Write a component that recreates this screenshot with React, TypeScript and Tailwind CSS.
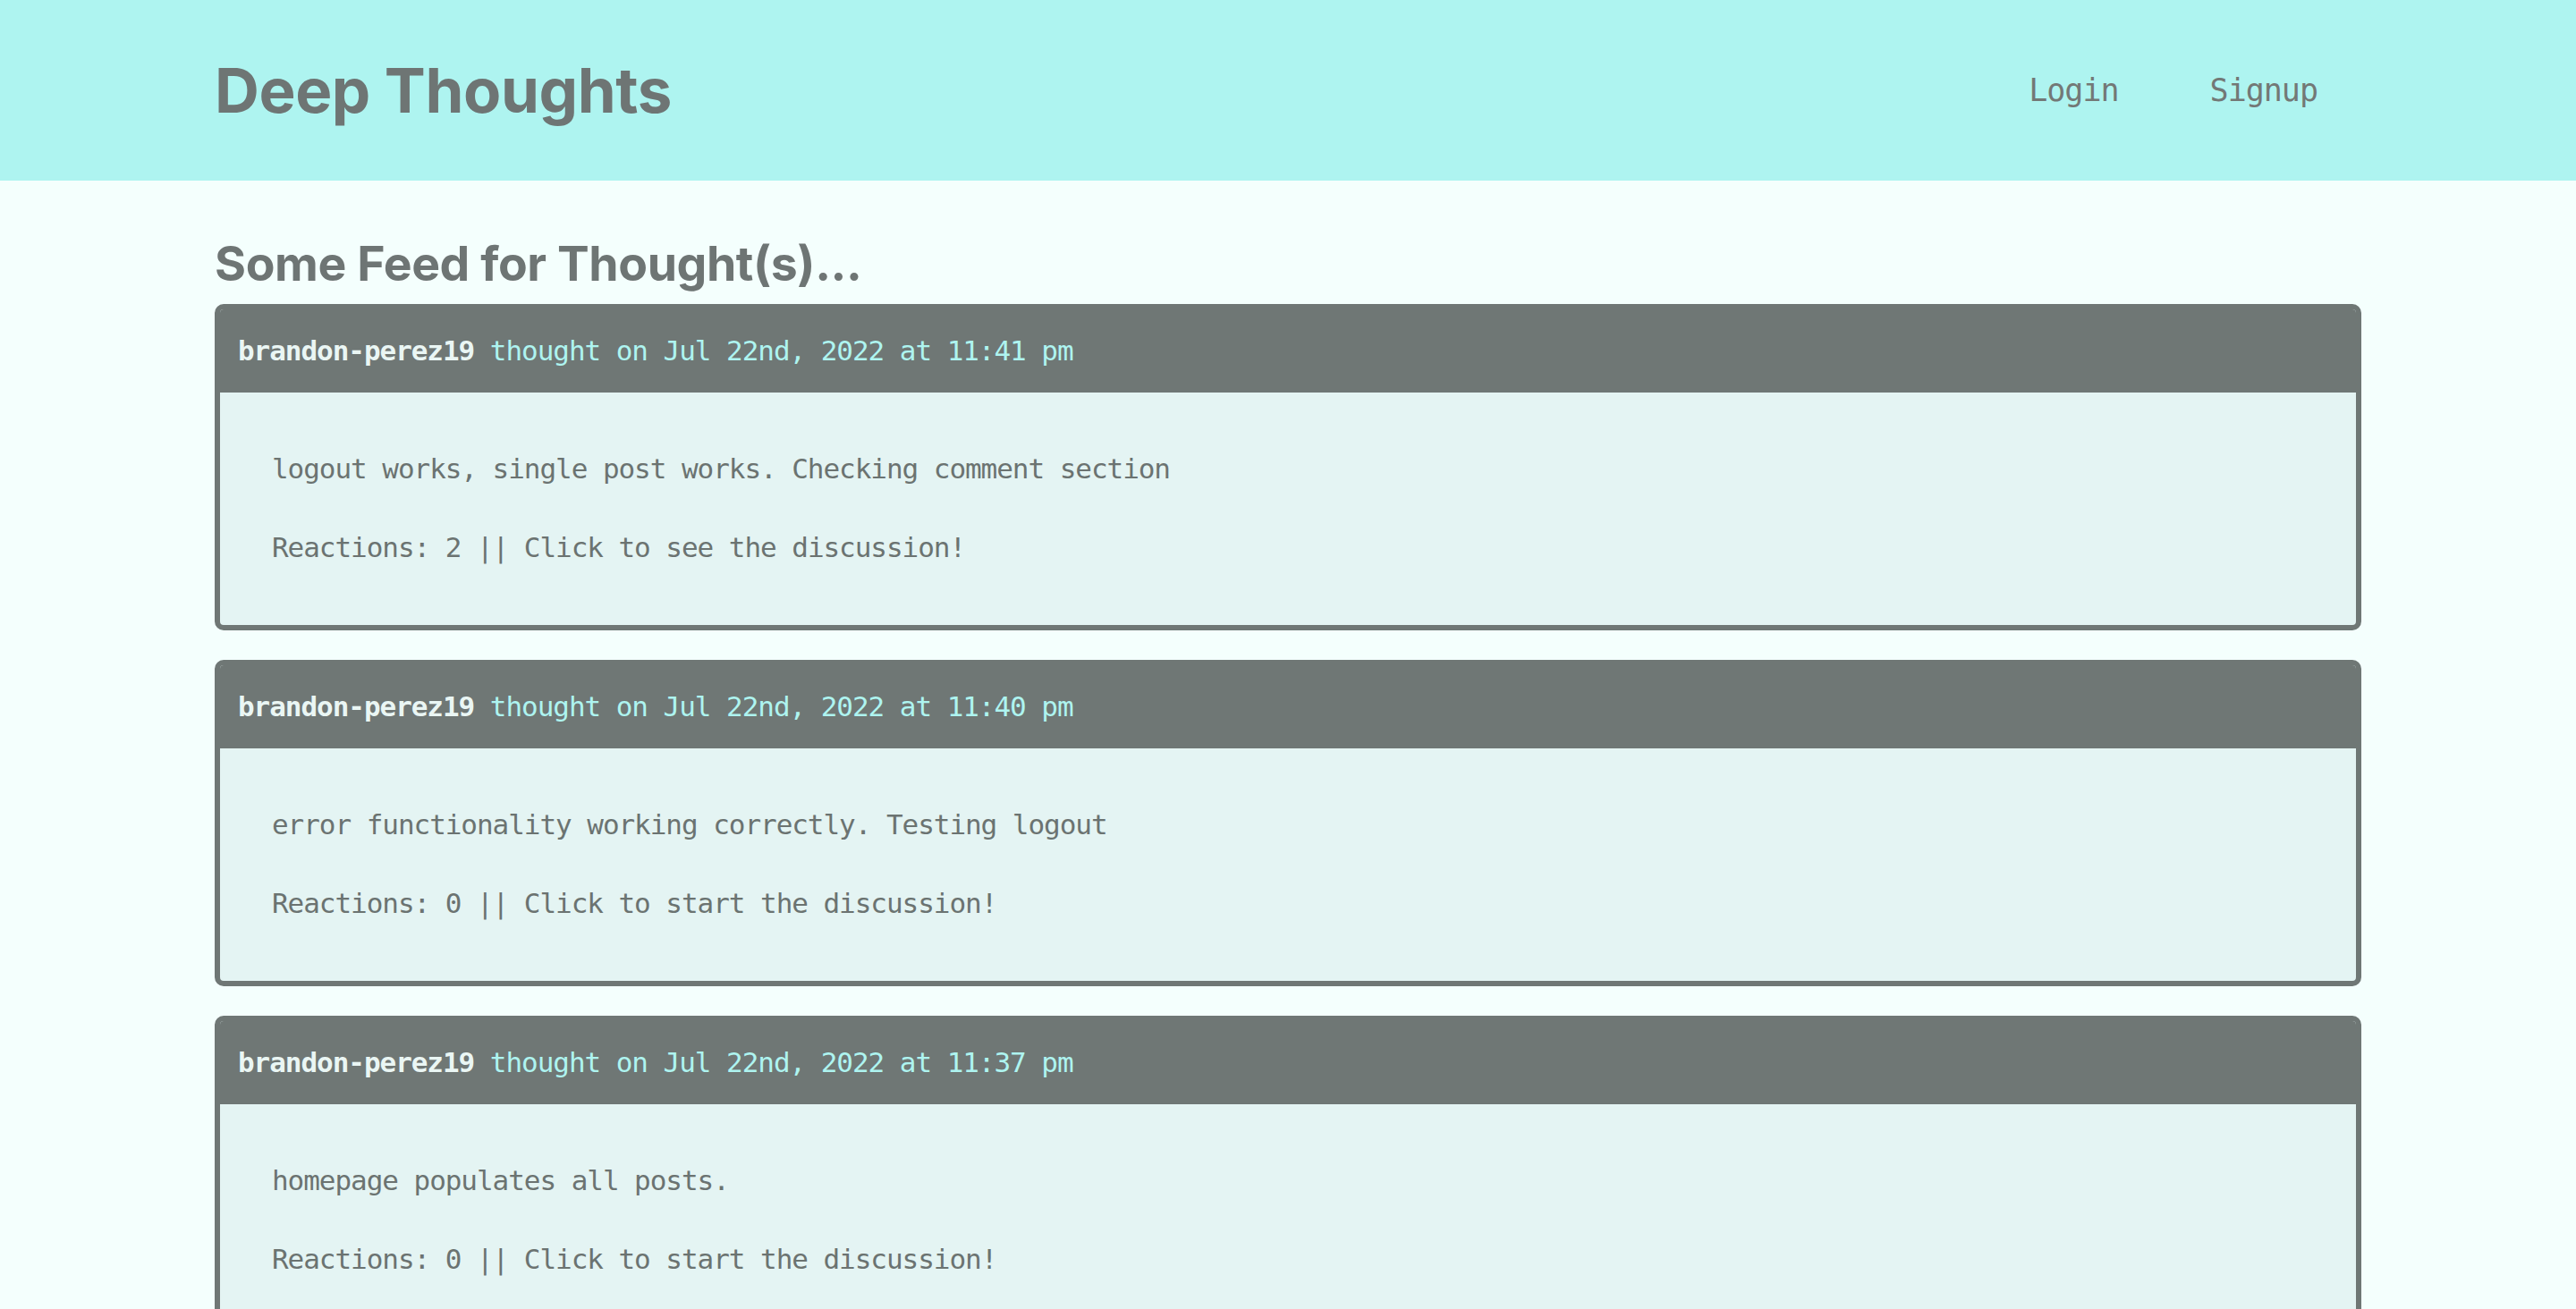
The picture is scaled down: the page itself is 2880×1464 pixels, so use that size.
import React from "react";

const thoughts = [
  {
    user: "brandon-perez19",
    date: "Jul 22nd, 2022 at 11:41 pm",
    text: "logout works, single post works. Checking comment section",
    reactions: 2,
    cta: "see",
  },
  {
    user: "brandon-perez19",
    date: "Jul 22nd, 2022 at 11:40 pm",
    text: "error functionality working correctly. Testing logout",
    reactions: 0,
    cta: "start",
  },
  {
    user: "brandon-perez19",
    date: "Jul 22nd, 2022 at 11:37 pm",
    text: "homepage populates all posts.",
    reactions: 0,
    cta: "start",
  },
];

const mono = { fontFamily: '"DejaVu Sans Mono", "Liberation Mono", monospace' };
const sans = { fontFamily: 'Inter, "Open Sans", sans-serif' };

export default function App() {
  return (
    <div className="min-h-screen bg-[#f4fffd]">
      <header className="bg-[#aef4f0]">
        <div className="mx-auto flex h-[202px] w-[2400px] items-center justify-between">
          <h1
            style={sans}
            className="text-[69px] font-bold leading-none tracking-[-0.4px] text-[#6e7574]"
          >
            Deep Thoughts
          </h1>
          <nav
            style={mono}
            className="flex gap-[102px] pr-[49px] text-[35px] leading-none tracking-[-1px] text-[#737876]"
          >
            <a>Login</a>
            <a>Signup</a>
          </nav>
        </div>
      </header>

      <main className="mx-auto w-[2400px]">
        <div className="flex h-[138px] items-end pb-[19px]">
          <h2
            style={sans}
            className="text-[53.5px] font-bold leading-[53px] tracking-[-0.4px] text-[#6e7574]"
          >
            Some Feed for Thought(s)...
          </h2>
        </div>
        <div className="flex flex-col gap-[33px]">
          {thoughts.map((t, i) => (
            <div
              key={i}
              className="overflow-hidden rounded-[10px] border-[6px] border-[#6f7775] bg-[#e4f4f3]"
            >
              <div
                style={mono}
                className="flex h-[93px] items-center bg-[#6f7775] pl-[20px] text-[31px] leading-none tracking-[-1.05px]"
              >
                <span className="font-bold text-[#eaf6f4]">{t.user}</span>
                <span className="whitespace-pre text-[#aef4f0]"> thought on {t.date}</span>
              </div>
              <div
                style={mono}
                className="flex flex-col gap-[44px] pb-[65px] pl-[58px] pt-[63px] text-[31px] leading-[44px] tracking-[-1.05px] text-[#6b7371]"
              >
                <p>{t.text}</p>
                <p>
                  Reactions: {t.reactions} || Click to {t.cta} the discussion!
                </p>
              </div>
            </div>
          ))}
        </div>
      </main>
    </div>
  );
}
